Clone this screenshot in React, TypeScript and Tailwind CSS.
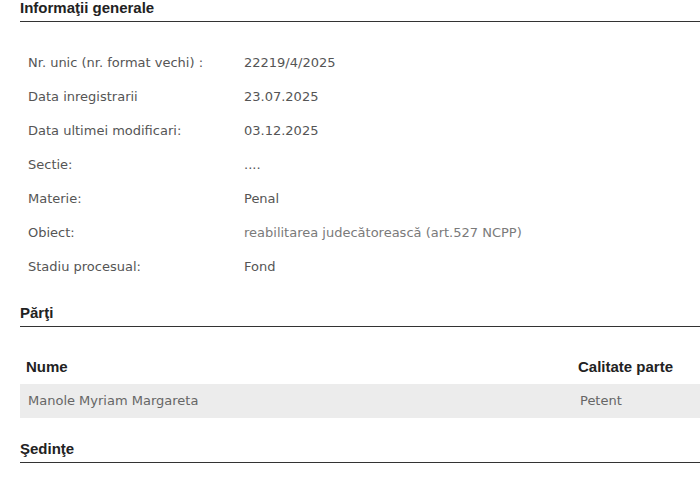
const rows: [string, string, string?][] = [
  ['Nr. unic (nr. format vechi) :', '22219/4/2025'],
  ['Data inregistrarii', '23.07.2025'],
  ['Data ultimei modificari:', '03.12.2025'],
  ['Sectie:', '....'],
  ['Materie:', 'Penal'],
  ['Obiect:', 'reabilitarea judecătorească (art.527 NCPP)', 'light'],
  ['Stadiu procesual:', 'Fond'],
];

function Heading({ children, className = '' }: { children: React.ReactNode; className?: string }) {
  return (
    <div
      className={`border-b border-[#333] pb-[5px] text-[15px] font-bold leading-[16px] text-[#222] ${className}`}
      style={{ fontFamily: '"Liberation Sans", Arial, sans-serif' }}
    >
      {children}
    </div>
  );
}

export default function App() {
  return (
    <div
      className="h-[492px] w-[700px] overflow-hidden bg-white pl-[20px] text-[13px] text-[#555]"
      style={{ fontFamily: '"DejaVu Sans", Verdana, sans-serif' }}
    >
      <Heading>Informaţii generale</Heading>
      <div className="mt-[24px] flex flex-col">
        {rows.map(([label, value, light]) => (
          <div key={label} className="flex h-[34px] items-center">
            <div className="w-[224px] shrink-0 pl-[8px] whitespace-nowrap">{label}</div>
            <div className={`whitespace-nowrap ${light ? 'text-[#7a7a7a]' : ''}`}>{value}</div>
          </div>
        ))}
      </div>
      <Heading className="mt-[21px]">Părţi</Heading>
      <div className="mt-[23px] flex flex-col">
        <div
          className="flex h-[34px] items-center text-[15px] font-bold text-[#222]"
          style={{ fontFamily: '"Liberation Sans", Arial, sans-serif' }}
        >
          <div className="flex-1 pl-[6px]">Nume</div>
          <div className="w-[122px]">Calitate parte</div>
        </div>
        <div className="flex h-[34px] items-center bg-[#ececec] text-[#666]">
          <div className="flex-1 pl-[8px]">Manole Myriam Margareta</div>
          <div className="w-[122px] pl-[2px]">Petent</div>
        </div>
      </div>
      <Heading className="mt-[23px]">Şedinţe</Heading>
    </div>
  );
}
